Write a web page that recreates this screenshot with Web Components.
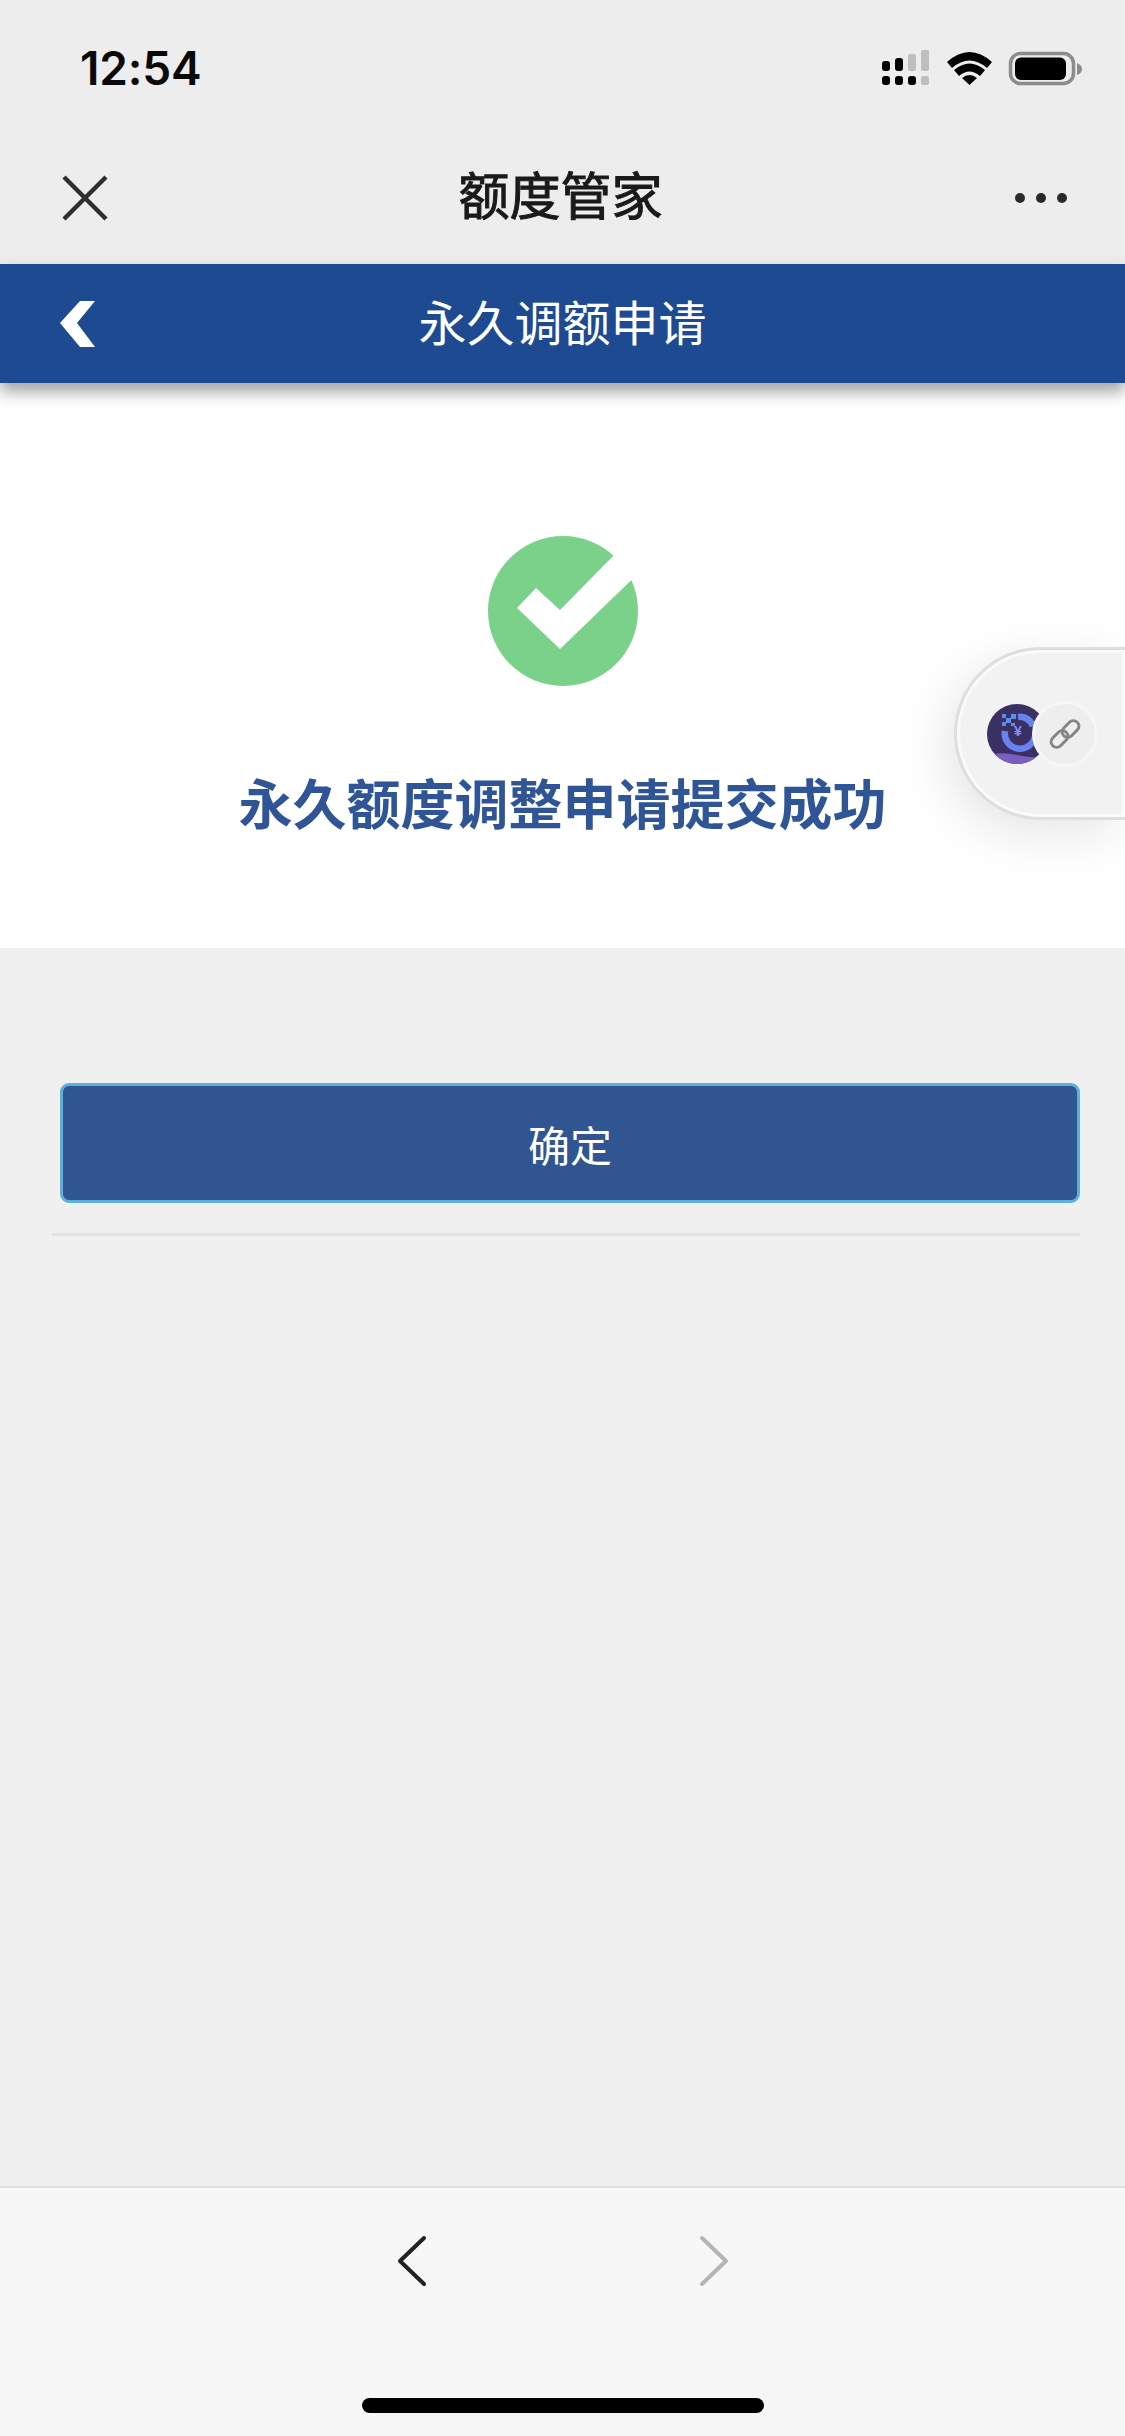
<!DOCTYPE html>
<html lang="zh-CN">
<head>
<meta charset="utf-8">
<title>额度管家</title>
<style>
  html, body { margin: 0; padding: 0; }
  body { width: 1125px; height: 2436px; overflow: hidden; background: #f0f0f0;
    font-family: "Liberation Sans", "Noto Sans CJK SC", sans-serif; }
  #app { display: flex; flex-direction: column; height: 2436px; position: relative; }
</style>
</head>
<body>
<div id="app">
  <status-bar time="12:54"></status-bar>
  <title-bar>额度管家</title-bar>
  <app-header>永久调额申请</app-header>
  <result-card>永久额度调整申请提交成功</result-card>
  <button-panel>确定</button-panel>
  <float-pill></float-pill>
  <bottom-toolbar></bottom-toolbar>
</div>

<script>
class StatusBar extends HTMLElement {
  connectedCallback() {
    this.attachShadow({ mode: "open" });
    this.shadowRoot.innerHTML = `
      <style>
        :host { display: flex; justify-content: space-between; align-items: flex-start;
          height: 132px; background: #ededed; }
        .time { margin: 44px 0 0 80px; font: 600 46px/48px Inter, "Liberation Sans", sans-serif;
          color: #0a0a0a; letter-spacing: -.2px; }
        svg { display: block; margin: 48px 43px 0 0; }
      </style>
      <span class="time">${this.getAttribute("time")}</span>
      <svg width="202" height="40" viewBox="880 48 202 40">
        <g fill="#000">
          <rect x="882" y="61" width="8" height="10" rx="3"/>
          <rect x="895" y="58" width="8" height="13" rx="3"/>
          <rect x="882" y="76" width="8" height="9" rx="3"/>
          <rect x="895" y="76" width="8" height="9" rx="3"/>
          <rect x="908" y="76" width="8" height="9" rx="3"/>
        </g>
        <g fill="#bfbfbf">
          <rect x="908" y="54" width="8" height="17" rx="2"/>
          <rect x="921" y="50" width="8" height="21" rx="2"/>
          <rect x="921" y="76" width="8" height="9" rx="2"/>
        </g>
        <path d="M947 62 Q969.500 42 992 62 L987 68 Q969.500 53 952 68 Z" fill="#000"/>
        <path d="M954 70 Q969.500 57 985 70 L980 76 Q969.500 67 959 76 Z" fill="#000"/>
        <path d="M962 78 Q969.500 72 977 78 L969.500 85 Z" fill="#000"/>
        <rect x="1010.500" y="53.500" width="63" height="30" rx="10" fill="none" stroke="#8c8c8c" stroke-width="3.500"/>
        <rect x="1015" y="57.500" width="51" height="22.500" rx="6" fill="#000"/>
        <path d="M1077 63 Q1082 65 1082 69 Q1082 73 1077 75 Z" fill="#8c8c8c"/>
      </svg>`;
  }
}

class TitleBar extends HTMLElement {
  connectedCallback() {
    this.attachShadow({ mode: "open" });
    this.shadowRoot.innerHTML = `
      <style>
        :host { display: grid; grid-template-columns: 120px 1fr 120px; align-items: center;
          height: 132px; background: #ededed; }
        .close { display: block; margin-left: 60px; }
        .title { text-align: center; font-size: 51px; line-height: 64px; color: #1a1a1a;
          -webkit-text-stroke: 1px #1a1a1a; transform: translateX(-2px); }
        .more { display: block; justify-self: end; margin-right: 57px; }
      </style>
      <svg class="close" width="50" height="50" viewBox="0 0 50 50" aria-label="关闭">
        <path d="M4 4 L46 46 M46 4 L4 46" stroke="#2f2f2f" stroke-width="4.500" fill="none"/>
      </svg>
      <div class="title"><slot></slot></div>
      <svg class="more" width="54" height="12" viewBox="0 0 54 12" aria-label="更多">
        <circle cx="6" cy="6" r="5" fill="#2a2a2a"/>
        <circle cx="27" cy="6" r="5" fill="#2a2a2a"/>
        <circle cx="48" cy="6" r="5" fill="#2a2a2a"/>
      </svg>`;
  }
}

class AppHeader extends HTMLElement {
  connectedCallback() {
    this.attachShadow({ mode: "open" });
    this.shadowRoot.innerHTML = `
      <style>
        :host { display: grid; grid-template-columns: 120px 1fr 120px; align-items: center;
          height: 119px; background: #1d4a91; position: relative; z-index: 2;
          box-shadow: 0 9px 15px rgba(0, 0, 0, .36); }
        svg { display: block; margin-left: 60px; filter: blur(.6px); }
        .title { padding-top: 2px; text-align: center; font-size: 48px; line-height: 60px; color: #fff; }
      </style>
      <svg width="36" height="48" viewBox="0 0 36 48" aria-label="返回">
        <path d="M0 23 L20 1 L35 1 L17 23 L35 47 L20 47 Z" fill="#fff"/>
      </svg>
      <div class="title"><slot></slot></div>`;
  }
}

class ResultCard extends HTMLElement {
  connectedCallback() {
    this.attachShadow({ mode: "open" });
    this.shadowRoot.innerHTML = `
      <style>
        :host { display: flex; flex-direction: column; align-items: center; box-sizing: border-box;
          height: 565px; padding-top: 153px; background: #fff; }
        svg { display: block; }
        .message { margin-top: 85px; font-size: 54px; line-height: 70px; font-weight: 700; color: #2f5597; }
      </style>
      <svg width="150" height="150" viewBox="0 0 150 150">
        <circle cx="75" cy="75" r="75" fill="#7ad189"/>
        <path d="M29 72 L48 52 L72 74 L135 10 L160 28 L72 113 Z" fill="#fff"/>
      </svg>
      <div class="message"><slot></slot></div>`;
  }
}

class ButtonPanel extends HTMLElement {
  connectedCallback() {
    this.attachShadow({ mode: "open" });
    this.shadowRoot.innerHTML = `
      <style>
        :host { display: flex; flex-direction: column; flex: 1; padding: 135px 45px 0 52px; }
        .button { display: flex; justify-content: center; align-items: center; box-sizing: border-box;
          height: 120px; margin-left: 8px; border: 3px solid #5fb0d8; border-radius: 9px;
          background: #315591; color: #fff; font-size: 42px; }
        .line { height: 3px; margin-top: 30px; background: #e2e2e2; }
      </style>
      <div class="button"><slot></slot></div>
      <div class="line"></div>`;
  }
}

class FloatPill extends HTMLElement {
  connectedCallback() {
    this.attachShadow({ mode: "open" });
    this.shadowRoot.innerHTML = `
      <style>
        :host { display: flex; align-items: center; box-sizing: border-box; position: absolute; z-index: 1;
          left: 954px; top: 647px; width: 171px; height: 173px; padding-left: 30px;
          border: 3px solid #dedede; border-right: 0; border-radius: 87px 0 0 87px; background: #f2f2f2;
          box-shadow: inset 0 0 0 3px #fafafa, -10px 14px 50px rgba(0, 0, 0, .1); }
        .logo { display: block; width: 60px; height: 60px; flex: none; }
        .link { display: flex; justify-content: center; align-items: center; flex: none;
          width: 60px; height: 60px; margin-left: -12px; border-radius: 50%; background: #eee;
          box-shadow: 0 0 0 3px #f6f6f6; position: relative; }
      </style>
      <svg class="logo" viewBox="0 0 60 60" aria-label="额度管家">
        <defs><clipPath id="round"><circle cx="30" cy="30" r="30"/></clipPath></defs>
        <g clip-path="url(#round)">
          <rect width="60" height="60" fill="#3a3063"/>
          <path d="M-2 52 Q12 47 30 51 T62 52 V62 H-2 Z" fill="#7a5fc0"/>
          <path d="M18 27 A15 15 0 0 0 48 32" fill="none" stroke="#6a82f0" stroke-width="6.500"/>
          <path d="M31 13 A14 14 0 0 1 46 22" fill="none" stroke="#6a82f0" stroke-width="6.500"/>
          <g fill="#5b8fe8">
            <rect x="15" y="10" width="4" height="4"/>
            <rect x="19" y="14" width="5" height="5"/>
            <rect x="24" y="10" width="5" height="5"/>
            <rect x="15" y="18" width="4" height="4"/>
            <rect x="24" y="19" width="4" height="3"/>
          </g>
          <text x="31" y="32" text-anchor="middle" font-family="Liberation Sans, sans-serif" font-size="14" font-weight="700" fill="#7f95f5">¥</text>
        </g>
      </svg>
      <div class="link">
        <svg width="34" height="34" viewBox="0 0 34 34" aria-label="链接">
          <g fill="none" stroke="#858585" stroke-width="3">
            <rect x="13" y="6.500" width="19" height="11" rx="5.500" transform="rotate(-45 22.500 12)"/>
            <rect x="2" y="16.500" width="19" height="11" rx="5.500" transform="rotate(-45 11.500 22)"/>
          </g>
        </svg>
      </div>`;
  }
}

class BottomToolbar extends HTMLElement {
  connectedCallback() {
    this.attachShadow({ mode: "open" });
    this.shadowRoot.innerHTML = `
      <style>
        :host { display: flex; flex-direction: column; align-items: center; box-sizing: border-box;
          height: 250px; border-top: 2px solid #dedede; background: #f7f7f7; }
        .arrows { display: flex; gap: 272px; margin: 47px 0 0 0; }
        svg { display: block; }
        .home { width: 402px; height: 15px; margin-top: 111px; border-radius: 8px; background: #000; }
      </style>
      <div class="arrows">
        <svg width="30" height="52" viewBox="0 0 30 52" aria-label="后退">
          <path d="M27 3 L3 26 L27 49" fill="none" stroke="#222" stroke-width="4" stroke-linecap="round" stroke-linejoin="round"/>
        </svg>
        <svg width="30" height="52" viewBox="0 0 30 52" aria-label="前进">
          <path d="M3 3 L27 26 L3 49" fill="none" stroke="#b5b5b5" stroke-width="4" stroke-linecap="round" stroke-linejoin="round"/>
        </svg>
      </div>
      <div class="home"></div>`;
  }
}

customElements.define("status-bar", StatusBar);
customElements.define("title-bar", TitleBar);
customElements.define("app-header", AppHeader);
customElements.define("result-card", ResultCard);
customElements.define("button-panel", ButtonPanel);
customElements.define("float-pill", FloatPill);
customElements.define("bottom-toolbar", BottomToolbar);
</script>
</body>
</html>
